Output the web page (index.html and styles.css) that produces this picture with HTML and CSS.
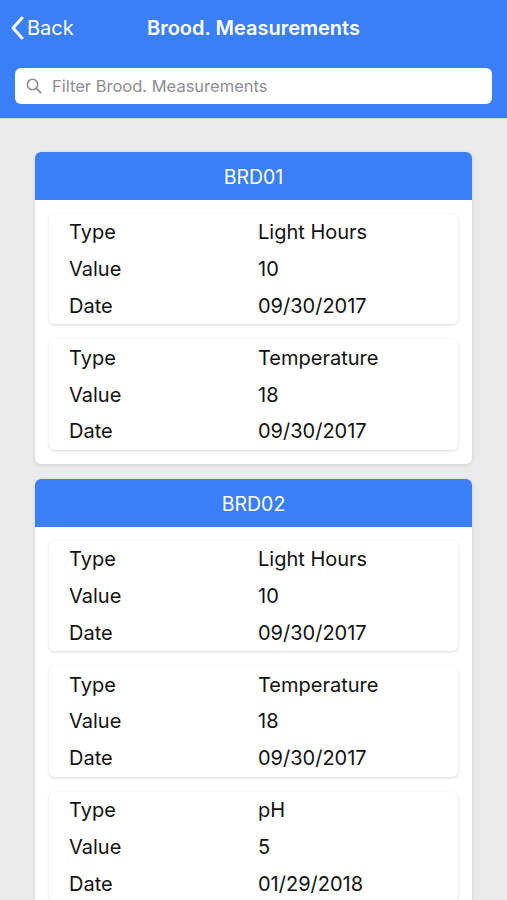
FILE: index.html
```html
<!DOCTYPE html>
<html lang="en">
<head>
    <meta charset="UTF-8">
    <meta name="viewport" content="width=device-width, initial-scale=1.0">
    <title>Brood. Measurements</title>
    <link rel="stylesheet" href="styles.css">
</head>
<body>
    <div class="header">
        <div class="nav-bar">
            <a class="back" href="#">
                <svg class="chevron" width="14" height="24" viewBox="0 0 14 24">
                    <path d="M12 2 L3 12 L12 22" fill="none" stroke="#fff" stroke-width="3" stroke-linecap="round" stroke-linejoin="round"/>
                </svg>
                Back
            </a>
            <h1>Brood. Measurements</h1>
        </div>
        <div class="search">
            <svg class="search-icon" width="16" height="16" viewBox="0 0 16 16">
                <circle cx="6.5" cy="6.5" r="5.2" fill="none" stroke="#8e8e93" stroke-width="1.6"/>
                <path d="M10.3 10.3 L14.5 14.5" stroke="#8e8e93" stroke-width="1.8" stroke-linecap="round"/>
            </svg>
            <input type="text" placeholder="Filter Brood. Measurements">
        </div>
    </div>

    <div class="list">
        <div class="group">
            <div class="group-title">BRD01</div>
            <div class="group-body">
                <div class="item">
                    <div class="row"><span class="label">Type</span><span class="value">Light Hours</span></div>
                    <div class="row"><span class="label">Value</span><span class="value">10</span></div>
                    <div class="row"><span class="label">Date</span><span class="value">09/30/2017</span></div>
                </div>
                <div class="item">
                    <div class="row"><span class="label">Type</span><span class="value">Temperature</span></div>
                    <div class="row"><span class="label">Value</span><span class="value">18</span></div>
                    <div class="row"><span class="label">Date</span><span class="value">09/30/2017</span></div>
                </div>
            </div>
        </div>

        <div class="group">
            <div class="group-title">BRD02</div>
            <div class="group-body">
                <div class="item">
                    <div class="row"><span class="label">Type</span><span class="value">Light Hours</span></div>
                    <div class="row"><span class="label">Value</span><span class="value">10</span></div>
                    <div class="row"><span class="label">Date</span><span class="value">09/30/2017</span></div>
                </div>
                <div class="item">
                    <div class="row"><span class="label">Type</span><span class="value">Temperature</span></div>
                    <div class="row"><span class="label">Value</span><span class="value">18</span></div>
                    <div class="row"><span class="label">Date</span><span class="value">09/30/2017</span></div>
                </div>
                <div class="item">
                    <div class="row"><span class="label">Type</span><span class="value">pH</span></div>
                    <div class="row"><span class="label">Value</span><span class="value">5</span></div>
                    <div class="row"><span class="label">Date</span><span class="value">01/29/2018</span></div>
                </div>
            </div>
        </div>
    </div>
</body>
</html>
```

FILE: styles.css
```css
body {
    margin: 0;
    background-color: #ebebeb;
    font-family: Inter, "Noto Sans", sans-serif;
    color: #111;
}
.header {
    background-color: #3a7ff6;
    height: 118px;
    padding: 0 15px;
    box-sizing: border-box;
}
.nav-bar {
    height: 56px;
    display: flex;
    align-items: center;
    justify-content: center;
    position: relative;
}
.back {
    position: absolute;
    left: -5px;
    top: 16px;
    display: flex;
    align-items: center;
    gap: 3px;
    color: #fff;
    text-decoration: none;
    font-size: 20px;
}
h1 {
    margin: 0;
    color: #fff;
    font-size: 20px;
    font-weight: 600;
}
.search {
    margin-top: 12px;
    height: 36px;
    background-color: #fff;
    border-radius: 6px;
    display: flex;
    align-items: center;
    padding: 0 11px;
    gap: 10px;
}
.search input {
    border: none;
    outline: none;
    font-family: inherit;
    font-size: 16.5px;
    flex: 1;
    padding: 0;
    background: transparent;
}
.search input::placeholder {
    color: #8e8e93;
}
.list {
    border-top: 1px solid #d9d9d9;
    padding: 33px 35px 0;
    display: flex;
    flex-direction: column;
    gap: 15px;
}
.group {
    background-color: #fff;
    border-radius: 6px;
    overflow: hidden;
    box-shadow: 0 1px 4px rgba(0,0,0,0.12);
}
.group-title {
    background-color: #3a7ff6;
    color: #fff;
    text-align: center;
    height: 48px;
    line-height: 50px;
    font-size: 19.5px;
}
.group-body {
    padding: 14px;
    display: flex;
    flex-direction: column;
    gap: 15px;
}
.item {
    border-radius: 6px;
    padding: 0 20px;
    box-shadow: 0 1px 3px rgba(0,0,0,0.16);
}
.row {
    display: flex;
    height: 36.8px;
    align-items: center;
    font-size: 20px;
}
.label {
    width: 189px;
}
```
